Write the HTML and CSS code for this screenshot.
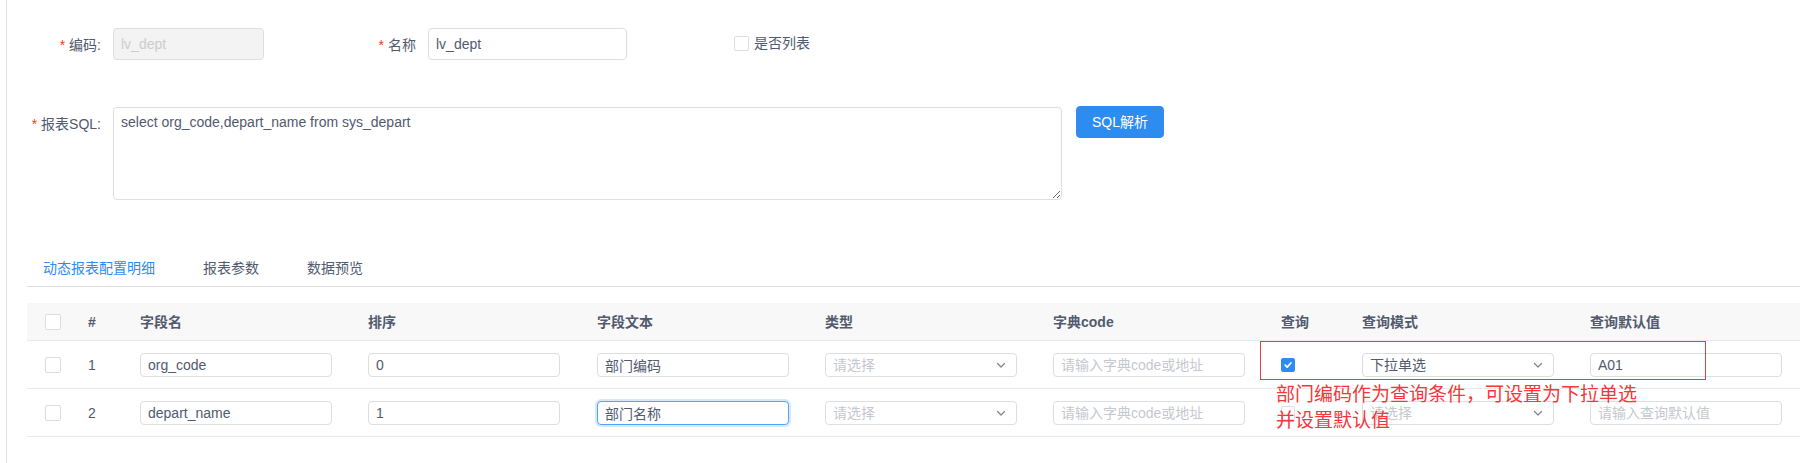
FILE: index.html
```html
<!DOCTYPE html>
<html lang="zh-CN">
<head>
<meta charset="utf-8">
<title>动态报表配置</title>
<link rel="stylesheet" href="styles.css">
</head>
<body>
<div class="page">
  <div class="form">
    <div class="row row-top">
      <label class="label req label-code">编码:</label>
      <input class="input input-code" value="lv_dept" disabled>
      <label class="label req label-name">名称</label>
      <input class="input input-name" value="lv_dept">
      <div class="check-item">
        <span class="cb cb15"></span>
        <span class="check-text">是否列表</span>
      </div>
    </div>
    <div class="row row-sql">
      <label class="label req label-sql">报表SQL:</label>
      <textarea class="textarea">select org_code,depart_name from sys_depart</textarea>
      <button class="btn-primary" type="button">SQL解析</button>
    </div>
  </div>

  <div class="tabs">
    <div class="tab active">动态报表配置明细</div>
    <div class="tab">报表参数</div>
    <div class="tab">数据预览</div>
  </div>

  <div class="table">
    <div class="thead">
      <div><span class="cb cb16"></span></div>
      <div>#</div>
      <div>字段名</div>
      <div>排序</div>
      <div>字段文本</div>
      <div>类型</div>
      <div>字典code</div>
      <div>查询</div>
      <div>查询模式</div>
      <div>查询默认值</div>
    </div>
    <div class="trow">
      <div><span class="cb cb16"></span></div>
      <div>1</div>
      <div><input class="cell-input" value="org_code"></div>
      <div><input class="cell-input" value="0"></div>
      <div><input class="cell-input" value="部门编码"></div>
      <div><div class="select"><span class="ph">请选择</span><svg class="chev" width="10" height="10" viewBox="0 0 10 10"><path d="M1.5 3.5 L5 7 L8.5 3.5" fill="none" stroke="#808695" stroke-width="1.3" stroke-linecap="round" stroke-linejoin="round"/></svg></div></div>
      <div><input class="cell-input" placeholder="请输入字典code或地址"></div>
      <div><span class="cb cb14 checked"><svg width="10" height="10" viewBox="0 0 10 10"><path d="M2.2 5.2 L4.2 7.1 L7.9 3" fill="none" stroke="#fff" stroke-width="1.8" stroke-linecap="round" stroke-linejoin="round"/></svg></span></div>
      <div><div class="select"><span class="val">下拉单选</span><svg class="chev" width="10" height="10" viewBox="0 0 10 10"><path d="M1.5 3.5 L5 7 L8.5 3.5" fill="none" stroke="#808695" stroke-width="1.3" stroke-linecap="round" stroke-linejoin="round"/></svg></div></div>
      <div><input class="cell-input" value="A01"></div>
    </div>
    <div class="trow">
      <div><span class="cb cb16"></span></div>
      <div>2</div>
      <div><input class="cell-input" value="depart_name"></div>
      <div><input class="cell-input" value="1"></div>
      <div><input class="cell-input focus" value="部门名称"></div>
      <div><div class="select"><span class="ph">请选择</span><svg class="chev" width="10" height="10" viewBox="0 0 10 10"><path d="M1.5 3.5 L5 7 L8.5 3.5" fill="none" stroke="#808695" stroke-width="1.3" stroke-linecap="round" stroke-linejoin="round"/></svg></div></div>
      <div><input class="cell-input" placeholder="请输入字典code或地址"></div>
      <div><span class="cb cb14"></span></div>
      <div><div class="select"><span class="ph">请选择</span><svg class="chev" width="10" height="10" viewBox="0 0 10 10"><path d="M1.5 3.5 L5 7 L8.5 3.5" fill="none" stroke="#808695" stroke-width="1.3" stroke-linecap="round" stroke-linejoin="round"/></svg></div></div>
      <div><input class="cell-input" placeholder="请输入查询默认值"></div>
    </div>

    <div class="note-box"></div>
    <div class="note-text">部门编码作为查询条件，可设置为下拉单选<br>并设置默认值</div>
  </div>
</div>
</body>
</html>
```

FILE: styles.css
```css
html, body {
  margin: 0;
  padding: 0;
}
body {
  width: 1812px;
  height: 463px;
  overflow: hidden;
  background: #fff;
  font-family: "Liberation Sans", "Noto Sans CJK SC", sans-serif;
  font-size: 14px;
  color: #515a6e;
}
.page {
  margin-left: 6px;
  border-left: 1px solid #e3e3e3;
  height: 463px;
  box-sizing: border-box;
  overflow: hidden;
}

/* ---------- form ---------- */
.form {
  padding-top: 28px;
}
.row {
  display: flex;
  align-items: flex-start;
}
.row-top {
  height: 32px;
}
.label {
  box-sizing: border-box;
  text-align: right;
  padding: 10px 12px 8px 0;
  line-height: 14px;
  font-size: 14px;
  color: #515a6e;
  white-space: nowrap;
}
.req::before {
  content: "*";
  color: #ed4014;
  margin-right: 4px;
  font-family: "Liberation Sans", sans-serif;
}
.label-code { width: 106px; }
.label-name { width: 164px; }
.label-sql { width: 106px; padding-top: 11px; }

.input {
  box-sizing: border-box;
  height: 32px;
  border: 1px solid #dcdee2;
  border-radius: 4px;
  padding: 0 7px;
  font: inherit;
  font-size: 14px;
  color: #515a6e;
  background: #fff;
  outline: none;
}
.input-code {
  width: 151px;
  background: #f3f3f3;
  color: #ccc;
  -webkit-text-fill-color: #ccc;
  opacity: 1;
}
.input-name { width: 199px; }

.check-item {
  display: flex;
  align-items: center;
  margin-left: 107px;
  margin-top: 8px;
  height: 15px;
}
.check-text {
  margin-left: 5px;
  line-height: 15px;
}

.row-sql {
  margin-top: 46px;
}
.textarea {
  box-sizing: border-box;
  width: 949px;
  height: 93px;
  margin: 1px 0 0 0;
  border: 1px solid #dcdee2;
  border-radius: 4px;
  padding: 4px 7px;
  font: inherit;
  font-size: 14px;
  line-height: 21px;
  color: #515a6e;
  outline: none;
  resize: vertical;
}
.btn-primary {
  box-sizing: border-box;
  margin-left: 14px;
  height: 32px;
  width: 88px;
  padding: 0;
  border: 1px solid #2d8cf0;
  border-radius: 4px;
  background: #2d8cf0;
  color: #fff;
  font: inherit;
  font-size: 14px;
  line-height: 30px;
}

/* ---------- tabs ---------- */
.tabs {
  display: flex;
  margin: 50px 0 0 20px;
  width: 1773px;
  border-bottom: 1px solid #dcdee2;
}
.tab {
  padding: 8px 16px;
  margin-right: 16px;
  line-height: 20px;
  color: #515a6e;
}
.tab.active {
  color: #2d8cf0;
}

/* ---------- table ---------- */
.table {
  position: relative;
  margin: 16px 0 0 20px;
  width: 1773px;
}
.thead, .trow {
  display: grid;
  grid-template-columns: 43px 52px 228px 229px 228px 228px 228px 81px 228px 210px;
  padding-left: 18px;
  align-items: center;
  box-sizing: border-box;
  border-bottom: 1px solid #e8eaec;
}
.thead {
  height: 38px;
  background: #f8f8f9;
  font-weight: bold;
  line-height: 20px;
}
.trow {
  height: 48px;
  line-height: 20px;
}
.thead > div, .trow > div {
  display: flex;
  align-items: center;
}

.cb {
  display: inline-flex;
  align-items: center;
  justify-content: center;
  box-sizing: border-box;
  border: 1px solid #dcdee2;
  border-radius: 2px;
  background: #fff;
}
.cb16 { width: 16px; height: 16px; }
.cb15 { width: 15px; height: 15px; }
.cb14 { width: 14px; height: 14px; }
.cb.checked {
  background: #2d8cf0;
  border-color: #2d8cf0;
}

.cell-input {
  box-sizing: border-box;
  width: 192px;
  height: 24px;
  border: 1px solid #dcdee2;
  border-radius: 4px;
  padding: 0 7px;
  font: inherit;
  font-weight: normal;
  font-size: 14px;
  color: #515a6e;
  background: #fff;
  outline: none;
}
.cell-input::placeholder {
  color: #c5c8ce;
}
.cell-input.focus {
  border-color: #57a3f3;
  box-shadow: 0 0 0 2px rgba(45, 140, 240, 0.2);
}

.select {
  box-sizing: border-box;
  width: 192px;
  height: 24px;
  border: 1px solid #dcdee2;
  border-radius: 4px;
  padding: 0 10px 0 7px;
  display: flex;
  align-items: center;
  justify-content: space-between;
  background: #fff;
}
.select .ph { color: #c5c8ce; }
.select .val { color: #515a6e; }
.chev { display: block; }

/* ---------- annotation overlay ---------- */
.note-box {
  position: absolute;
  left: 1233px;
  top: 38px;
  width: 446px;
  height: 39px;
  border: 1px solid #ec3b3b;
  box-sizing: border-box;
}
.note-text {
  position: absolute;
  left: 1249px;
  top: 77px;
  font-family: "Noto Sans CJK SC", sans-serif;
  font-size: 19px;
  line-height: 26px;
  color: #f5363a;
  white-space: nowrap;
}
```
